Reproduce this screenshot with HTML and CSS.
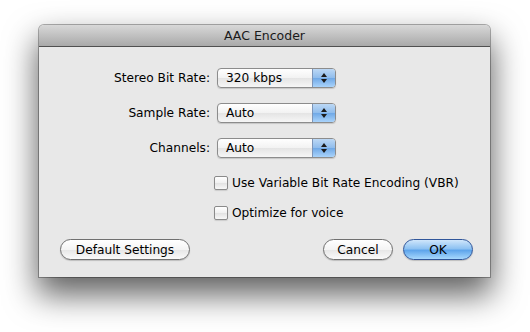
FILE: index.html
```html
<!DOCTYPE html>
<html lang="en">
<head>
    <meta charset="UTF-8">
    <title>AAC Encoder</title>
    <link rel="stylesheet" href="styles.css">
</head>
<body>
    <div class="sheet">
        <div class="titlebar">AAC Encoder</div>
        <div class="content">
            <div class="form-grid">
                <label class="field-label">Stereo Bit Rate:</label>
                <div class="popup">
                    <span class="popup-value">320 kbps</span>
                    <span class="popup-arrows"><i class="up"></i><i class="down"></i></span>
                </div>

                <label class="field-label">Sample Rate:</label>
                <div class="popup">
                    <span class="popup-value">Auto</span>
                    <span class="popup-arrows"><i class="up"></i><i class="down"></i></span>
                </div>

                <label class="field-label">Channels:</label>
                <div class="popup">
                    <span class="popup-value">Auto</span>
                    <span class="popup-arrows"><i class="up"></i><i class="down"></i></span>
                </div>
            </div>

            <div class="options">
                <label class="check-row"><span class="checkbox"></span>Use Variable Bit Rate Encoding (VBR)</label>
                <label class="check-row"><span class="checkbox"></span>Optimize for voice</label>
            </div>

            <div class="button-bar">
                <button class="btn btn-wide">Default Settings</button>
                <div class="button-group">
                    <button class="btn">Cancel</button>
                    <button class="btn btn-default">OK</button>
                </div>
            </div>
        </div>
    </div>
</body>
</html>
```

FILE: styles.css
```css
html {
    background: #ffffff;
}

body {
    margin: 0;
    min-height: 332px;
    box-sizing: border-box;
    padding: 25px 0 0 39px;
    background: #ffffff;
    font-family: "DejaVu Sans", "Liberation Sans", sans-serif;
    font-size: 12.2px;
    color: #000;
}

.sheet {
    width: 451px;
    background: #e8e8e8;
    border-radius: 5px 5px 0 0;
    box-shadow: 0 0 0 1px rgba(0,0,0,0.3), 0 16px 32px 2px rgba(0,0,0,0.62);
}

.titlebar {
    height: 21px;
    line-height: 21px;
    text-align: center;
    font-size: 12.5px;
    color: #1a1a1a;
    background: linear-gradient(#d8d8d8, #a9a9a9);
    border-bottom: 1px solid #505050;
    border-radius: 5px 5px 0 0;
}

.content {
    padding: 21px 0 17px 0;
}

.form-grid {
    display: grid;
    grid-template-columns: 171px 119px;
    column-gap: 7px;
    row-gap: 15px;
    align-items: center;
}

.field-label {
    text-align: right;
}

.popup {
    height: 18px;
    display: flex;
    border: 1px solid #8c8c8c;
    border-radius: 4px;
    background: linear-gradient(#ffffff, #f2f2f2 50%, #e4e4e4 51%, #f6f6f6);
    box-shadow: 0 1px 1px rgba(0,0,0,0.15);
    overflow: hidden;
}

.popup-value {
    flex: 1;
    line-height: 18px;
    padding-left: 8px;
}

.popup-arrows {
    width: 22px;
    border-left: 1px solid #7d95b8;
    background: linear-gradient(#bcd8f5, #8fbcec 50%, #6fa8e6 51%, #a9d3fb);
    display: flex;
    flex-direction: column;
    align-items: center;
    justify-content: center;
    gap: 2px;
}

.popup-arrows i {
    width: 0;
    height: 0;
    border-left: 3px solid transparent;
    border-right: 3px solid transparent;
}

.popup-arrows .up {
    border-bottom: 4px solid #1c1c1c;
}

.popup-arrows .down {
    border-top: 4px solid #1c1c1c;
}

.options {
    margin: 17px 0 0 175px;
    display: flex;
    flex-direction: column;
    gap: 14px;
}

.check-row {
    display: flex;
    align-items: center;
    gap: 4px;
    height: 16px;
}

.checkbox {
    width: 12px;
    height: 12px;
    border: 1px solid #8a8a8a;
    border-radius: 2px;
    background: linear-gradient(#ffffff, #f0f0f0 50%, #e2e2e2 51%, #f8f8f8);
    box-shadow: 0 1px 1px rgba(0,0,0,0.12);
}

.button-bar {
    display: flex;
    justify-content: space-between;
    margin: 18px 17px 0 21px;
}

.button-group {
    display: flex;
    gap: 10px;
}

.btn {
    height: 21px;
    width: 70px;
    padding: 0;
    font-family: inherit;
    font-size: 12.2px;
    color: #000;
    border: 1px solid #707070;
    border-radius: 11px;
    background: linear-gradient(#ffffff, #f4f4f4 50%, #e6e6e6 51%, #fafafa);
    box-shadow: 0 1px 1px rgba(0,0,0,0.18);
}

.btn-wide {
    width: 130px;
}

.btn-default {
    border-color: #30569a;
    background: linear-gradient(#cfe6fb, #8ec2f2 45%, #5fa5eb 55%, #a7d8fd);
}
```
